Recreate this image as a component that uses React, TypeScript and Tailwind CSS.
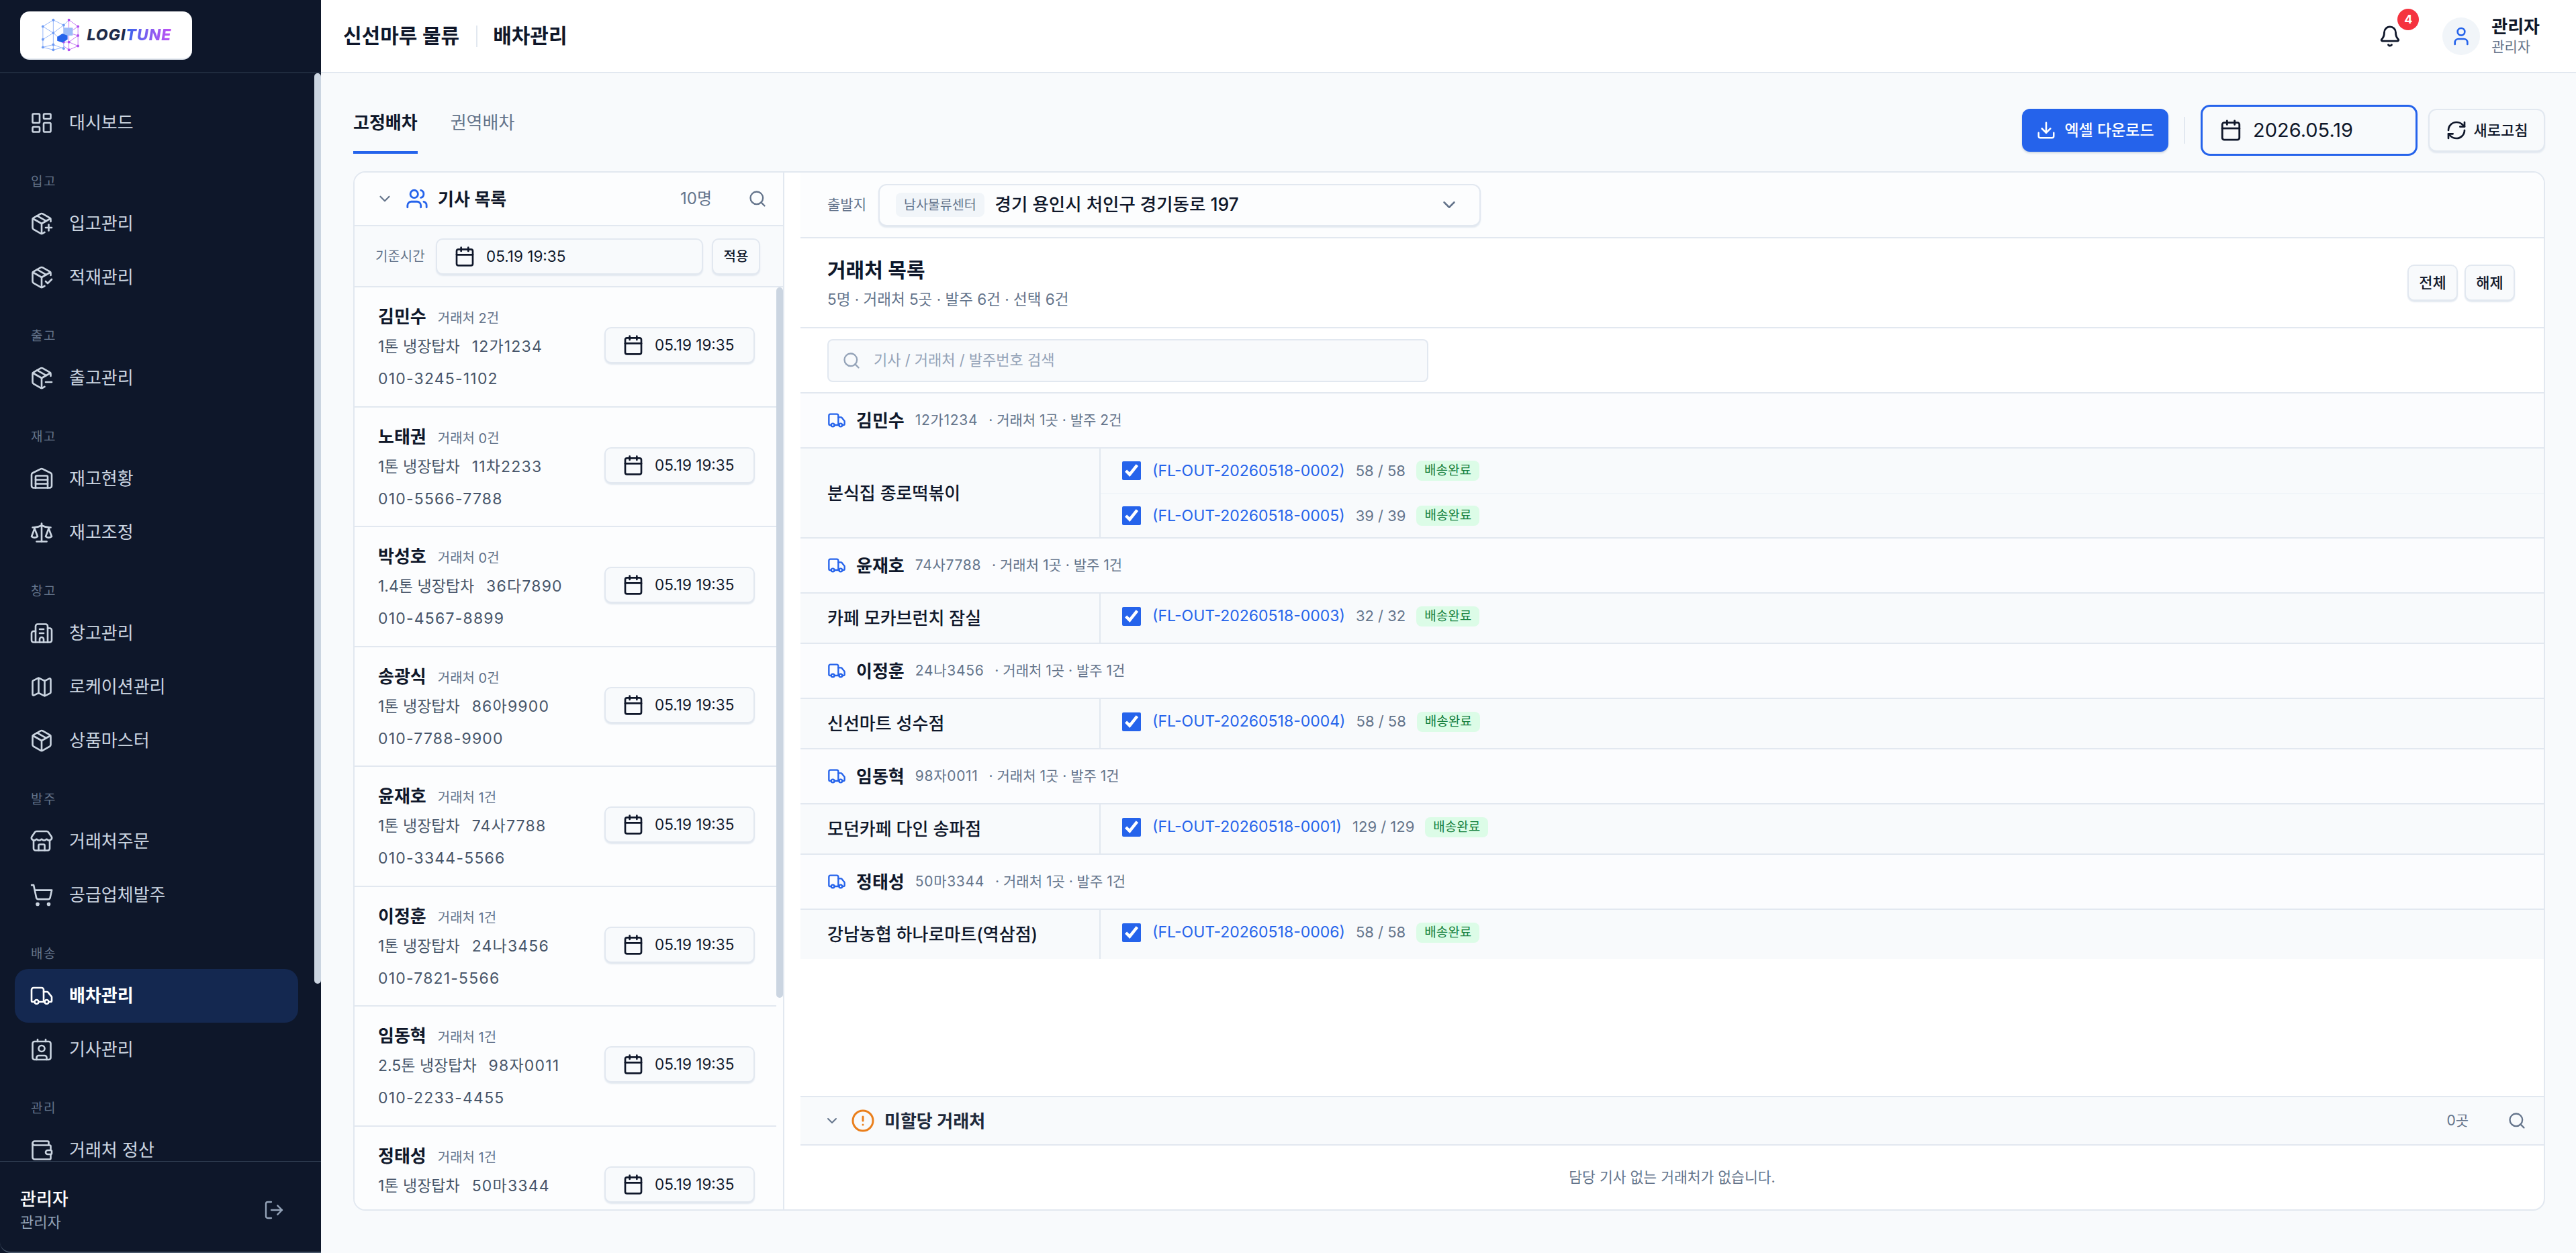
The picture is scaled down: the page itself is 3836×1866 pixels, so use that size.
import {
  Bell,
  Building2,
  Calendar,
  ChevronDown,
  CircleAlert,
  Contact,
  Download,
  LayoutDashboard,
  LogOut,
  Map as MapIcon,
  Package,
  PackageCheck,
  PackageMinus,
  PackagePlus,
  RefreshCw,
  Scale,
  Search,
  ShoppingCart,
  Store,
  Truck,
  User,
  Users,
  Wallet,
  Warehouse,
} from "lucide-react";

const navSections = [
  { items: [{ label: "대시보드", icon: LayoutDashboard }] },
  {
    title: "입고",
    items: [
      { label: "입고관리", icon: PackagePlus },
      { label: "적재관리", icon: PackageCheck },
    ],
  },
  { title: "출고", items: [{ label: "출고관리", icon: PackageMinus }] },
  {
    title: "재고",
    items: [
      { label: "재고현황", icon: Warehouse },
      { label: "재고조정", icon: Scale },
    ],
  },
  {
    title: "창고",
    items: [
      { label: "창고관리", icon: Building2 },
      { label: "로케이션관리", icon: MapIcon },
      { label: "상품마스터", icon: Package },
    ],
  },
  {
    title: "발주",
    items: [
      { label: "거래처주문", icon: Store },
      { label: "공급업체발주", icon: ShoppingCart },
    ],
  },
  {
    title: "배송",
    items: [
      { label: "배차관리", icon: Truck, active: true },
      { label: "기사관리", icon: Contact },
    ],
  },
  { title: "관리", items: [{ label: "거래처 정산", icon: Wallet }] },
];

const drivers = [
  { name: "김민수", count: 2, car: "1톤 냉장탑차", plate: "12가1234", phone: "010-3245-1102" },
  { name: "노태권", count: 0, car: "1톤 냉장탑차", plate: "11차2233", phone: "010-5566-7788" },
  { name: "박성호", count: 0, car: "1.4톤 냉장탑차", plate: "36다7890", phone: "010-4567-8899" },
  { name: "송광식", count: 0, car: "1톤 냉장탑차", plate: "86아9900", phone: "010-7788-9900" },
  { name: "윤재호", count: 1, car: "1톤 냉장탑차", plate: "74사7788", phone: "010-3344-5566" },
  { name: "이정훈", count: 1, car: "1톤 냉장탑차", plate: "24나3456", phone: "010-7821-5566" },
  { name: "임동혁", count: 1, car: "2.5톤 냉장탑차", plate: "98자0011", phone: "010-2233-4455" },
  { name: "정태성", count: 1, car: "1톤 냉장탑차", plate: "50마3344", phone: "010-9988-7766" },
];

const groups = [
  {
    driver: "김민수",
    plate: "12가1234",
    orderCount: 2,
    client: "분식집 종로떡볶이",
    orders: [
      { code: "(FL-OUT-20260518-0002)", qty: "58 / 58" },
      { code: "(FL-OUT-20260518-0005)", qty: "39 / 39" },
    ],
  },
  {
    driver: "윤재호",
    plate: "74사7788",
    orderCount: 1,
    client: "카페 모카브런치 잠실",
    orders: [{ code: "(FL-OUT-20260518-0003)", qty: "32 / 32" }],
  },
  {
    driver: "이정훈",
    plate: "24나3456",
    orderCount: 1,
    client: "신선마트 성수점",
    orders: [{ code: "(FL-OUT-20260518-0004)", qty: "58 / 58" }],
  },
  {
    driver: "임동혁",
    plate: "98자0011",
    orderCount: 1,
    client: "모던카페 다인 송파점",
    orders: [{ code: "(FL-OUT-20260518-0001)", qty: "129 / 129" }],
  },
  {
    driver: "정태성",
    plate: "50마3344",
    orderCount: 1,
    client: "강남농협 하나로마트(역삼점)",
    orders: [{ code: "(FL-OUT-20260518-0006)", qty: "58 / 58" }],
  },
];

function LogoMark() {
  const blue = [
    [4, 12], [4, 32], [4, 44], [20, 2], [20, 22], [20, 40], [20, 48], [36, 10], [36, 46],
  ];
  const purple = [
    [44, 2], [44, 22], [44, 36], [44, 48], [58, 12], [58, 26], [58, 42], [36, 36],
  ];
  return (
    <svg width="60" height="50" viewBox="0 0 62 50" fill="none">
      <g stroke="#7aa2f7" strokeWidth="0.8">
        <path d="M4 12 20 2 36 10 44 2M4 12v32l16 4 16-4M20 2v46M4 12l16 10 16-12M4 32l16-10 16 14M4 44l16-4 16 6M36 10v36" />
      </g>
      <g stroke="#b456f0" strokeWidth="0.8">
        <path d="M44 2 58 12v30L44 48 36 42M44 2v46M58 12 44 22 36 14M58 26 44 22M58 26 44 36M58 42 44 36 36 36" />
      </g>
      {blue.map(([x, y]) => (
        <circle key={`${x}-${y}`} cx={x} cy={y} r="2" fill="#6d9bf5" />
      ))}
      {purple.map(([x, y]) => (
        <circle key={`${x}-${y}`} cx={x} cy={y} r="2" fill="#b04df0" />
      ))}
      <rect x="36" y="14" width="14" height="12" rx="1" fill="#9dbcf8" />
      <path d="M26 28 34 23 42 26 42 32 34 37 26 34Z" fill="#2563eb" />
    </svg>
  );
}

function Sidebar() {
  return (
    <aside className="flex h-full w-[478px] shrink-0 flex-col rounded-bl-[16px] border-b-2 border-[#475569] bg-[#0e172a] text-[#cbd5e1]">
      <div className="flex h-[109px] shrink-0 items-start border-b border-[#334155] pl-[30px] pt-[17px]">
        <div className="flex h-[72px] w-[256px] items-center justify-center gap-[9px] rounded-[14px] border-b-2 border-[#e2e8f0] bg-white">
          <LogoMark />
          <span className="text-[23px] font-extrabold italic leading-none tracking-[1px] text-[#1e2b4a]">
            LOGI
            <span className="bg-gradient-to-r from-[#2563eb] to-[#c04df5] bg-clip-text text-transparent">TUNE</span>
          </span>
        </div>
      </div>
      <div className="relative min-h-0 flex-1 overflow-hidden">
        <nav className="pl-[22px] pr-[34px] pt-[34px]">
          {navSections.map((section, i) => (
            <div key={i}>
              {section.title && (
                <div className="pl-[24px] pt-[32px] pb-[6px] text-[19px] leading-[32px] tracking-[1.5px] text-[#64748b]">
                  {section.title}
                </div>
              )}
              {section.items.map((item) => (
                <div
                  key={item.label}
                  className={`flex h-[80px] items-center gap-[23px] rounded-[20px] pl-[22px] text-[26px] leading-[30px] ${
                    item.active ? "bg-[#142850] font-semibold text-white" : ""
                  }`}
                >
                  <item.icon size={36} strokeWidth={1.75} />
                  <span>{item.label}</span>
                </div>
              ))}
            </div>
          ))}
        </nav>
        <div className="absolute right-0 top-0 h-[1356px] w-[10px] rounded-full bg-[#cbd5e1]" />
      </div>
      <div className="flex h-[135px] shrink-0 items-center justify-between border-t border-[#334155] pl-[30px] pr-[54px] pt-[9px]">
        <div>
          <div className="text-[26px] font-medium leading-[36px] text-white">관리자</div>
          <div className="text-[22px] leading-[32px] text-[#94a3b8]">관리자</div>
        </div>
        <LogOut size={32} strokeWidth={1.75} className="text-[#94a3b8]" />
      </div>
    </aside>
  );
}

function DateButton({ className }: { className: string }) {
  return (
    <div
      className={`flex h-[54px] items-center gap-[16px] rounded-[10px] border-2 border-[#e2e8f0] bg-[#f8fafc] pl-[25px] text-[22.5px] text-[#0f172a] shadow-[0_2px_2px_#e2e8f0] ${className}`}
    >
      <Calendar size={32} strokeWidth={2} className="shrink-0" />
      <span>05.19 19:35</span>
    </div>
  );
}

function SmallButton({ children }: { children: string }) {
  return (
    <button className="flex h-[54px] w-[75px] items-center justify-center rounded-[10px] border-2 border-[#e2e8f0] bg-[#f8fafc] text-[22px] font-medium text-[#0f172a] shadow-[0_2px_2px_#e2e8f0]">
      {children}
    </button>
  );
}

function DriverPanel() {
  return (
    <section className="flex h-full w-[640px] shrink-0 flex-col border-r-2 border-[#e2e8f0] bg-[#fcfdfe]">
      <div className="flex h-[80px] shrink-0 items-center border-b-2 border-[#e2e8f0] pl-[32px] pr-[24px]">
        <ChevronDown size={26} className="text-[#64748b]" />
        <Users size={34} strokeWidth={2} className="ml-[18px] text-[#2563eb]" />
        <span className="ml-[14px] text-[26px] font-semibold text-[#0f172a]">기사 목록</span>
        <span className="ml-auto text-[24px] text-[#64748b]">10명</span>
        <Search size={28} strokeWidth={2} className="ml-[54px] text-[#64748b]" />
      </div>
      <div className="flex h-[91px] shrink-0 items-center border-b-2 border-[#e2e8f0] bg-[#f8fafc] pl-[31px]">
        <span className="w-[90px] text-[20px] text-[#64748b]">기준시간</span>
        <DateButton className="w-[398px]" />
        <button className="ml-[13px] flex h-[54px] w-[72px] items-center justify-center rounded-[10px] border-2 border-[#e2e8f0] bg-[#f8fafc] text-[20px] font-medium text-[#0f172a] shadow-[0_2px_2px_#e2e8f0]">
          적용
        </button>
      </div>
      <div className="relative min-h-0 flex-1 overflow-hidden">
        <div className="w-[628px]">
          {drivers.map((d) => (
            <div
              key={d.name}
              className="flex h-[178.5px] items-center justify-between border-b-2 border-[#e2e8f0] pl-[35px] pr-[32px]"
            >
              <div className="mt-[8px] flex flex-col">
                <div className="flex items-baseline gap-[17px]">
                  <span className="text-[26px] font-semibold leading-[44px] text-[#0f172a]">{d.name}</span>
                  <span className="text-[20px] text-[#64748b]">거래처 {d.count}건</span>
                </div>
                <div className="flex gap-[18px] text-[23px] leading-[44px] text-[#475569]">
                  <span>{d.car}</span>
                  <span className="tracking-[1.2px]">{d.plate}</span>
                </div>
                <div className="text-[23px] leading-[52px] tracking-[1.2px] text-[#475569]">{d.phone}</div>
              </div>
              <DateButton className="mb-[4px] w-[224px]" />
            </div>
          ))}
        </div>
        <div className="absolute right-0 top-0 h-[1058px] w-[10px] rounded-full bg-[#cbd5e1]" />
      </div>
    </section>
  );
}

function ClientGroup({ group, isLast }: { group: (typeof groups)[number]; isLast: boolean }) {
  const single = group.orders.length === 1;
  return (
    <div>
      <div className="flex h-[82px] items-center border-b-2 border-[#e2e8f0] bg-[#fbfcfe] pl-[40px]">
        <Truck size={28} strokeWidth={2} className="text-[#2563eb]" />
        <span className="ml-[15px] text-[26px] font-semibold text-[#0f172a]">{group.driver}</span>
        <span className="ml-[16px] text-[21px] tracking-[0.7px] text-[#64748b]">{group.plate}</span>
        <span className="ml-[16px] text-[21px] text-[#64748b]">· 거래처 1곳 · 발주 {group.orderCount}건</span>
      </div>
      <div className={`flex bg-[#f8fafc] ${isLast ? "" : "border-b-2 border-[#e2e8f0]"}`}>
        <div className="flex w-[447px] shrink-0 items-center border-r-2 border-[#e2e8f0] pl-[40px] text-[26px] font-medium text-[#0f172a]">
          {group.client}
        </div>
        <div className="flex-1">
          {group.orders.map((o, i) => (
            <div
              key={o.code}
              className={`flex items-center pl-[32px] ${single ? "h-[73px] pb-[6px]" : "h-[66px]"} ${
                i > 0 ? "border-t-2 border-[#f1f5f9]" : ""
              }`}
            >
              <input type="checkbox" readOnly checked className="h-[28px] w-[28px] accent-[#2563eb]" />
              <span className="ml-[17px] text-[23px] text-[#2563eb]">{o.code}</span>
              <span className="ml-[16px] text-[22px] text-[#64748b]">{o.qty}</span>
              <span className="ml-[16px] rounded-[8px] bg-[#dcfce7] px-[12px] text-[19px] leading-[30px] text-[#15803d]">
                배송완료
              </span>
            </div>
          ))}
        </div>
      </div>
    </div>
  );
}

function ClientPanel() {
  return (
    <section className="flex h-full min-w-0 flex-1 flex-col pl-[24px]">
      <div className="flex h-[98px] shrink-0 items-center border-b-2 border-[#e2e8f0] bg-[#fcfdfe] pl-[40px]">
        <span className="text-[21px] text-[#64748b]">출발지</span>
        <div className="ml-[18px] flex h-[63px] w-[897px] items-center rounded-[12px] border-2 border-[#e2e8f0] bg-[#fcfdfe] pl-[24px] pr-[30px] shadow-[0_2px_2px_#e2e8f0]">
          <span className="rounded-[8px] bg-[#f1f5f9] px-[12px] text-[19.5px] leading-[36px] text-[#64748b]">남사물류센터</span>
          <span className="ml-[16px] text-[26.5px] font-medium text-[#0f172a]">경기 용인시 처인구 경기동로 197</span>
          <ChevronDown size={30} strokeWidth={2} className="ml-auto text-[#64748b]" />
        </div>
      </div>
      <div className="flex h-[134px] shrink-0 items-center justify-between border-b-2 border-[#e2e8f0] pl-[40px] pr-[43px] pt-[6px]">
        <div>
          <div className="text-[30px] font-semibold leading-[44px] text-[#0f172a]">거래처 목록</div>
          <div className="text-[22.5px] leading-[44px] text-[#64748b]">5명 · 거래처 5곳 · 발주 6건 · 선택 6건</div>
        </div>
        <div className="-mt-[6px] flex gap-[10px]">
          <SmallButton>전체</SmallButton>
          <SmallButton>해제</SmallButton>
        </div>
      </div>
      <div className="flex h-[97px] shrink-0 items-center border-b-2 border-[#e2e8f0] pl-[40px]">
        <div className="flex h-[64px] w-[895px] items-center gap-[19px] rounded-[8px] border-2 border-[#e2e8f0] bg-[#f8fafc] pl-[20px] text-[22px] text-[#94a3b8]">
          <Search size={28} strokeWidth={2} />
          <span>기사 / 거래처 / 발주번호 검색</span>
        </div>
      </div>
      <div className="min-h-0 flex-1">
        {groups.map((g, i) => (
          <ClientGroup key={g.driver} group={g} isLast={i === groups.length - 1} />
        ))}
      </div>
      <div className="flex h-[74px] shrink-0 items-center border-y-2 border-[#e2e8f0] bg-[#f8fafc] pl-[35px] pr-[26px]">
        <ChevronDown size={24} className="text-[#64748b]" />
        <CircleAlert size={36} strokeWidth={2} className="ml-[16px] text-[#ea7f1c]" />
        <span className="ml-[14px] text-[26px] font-semibold text-[#1e293b]">미할당 거래처</span>
        <span className="ml-auto text-[21px] text-[#64748b]">0곳</span>
        <Search size={28} strokeWidth={2} className="ml-[58px] text-[#64748b]" />
      </div>
      <div className="flex h-[95px] shrink-0 items-center justify-center text-[21.5px] text-[#64748b]">
        담당 기사 없는 거래처가 없습니다.
      </div>
    </section>
  );
}

export default function App() {
  return (
    <div className="flex h-screen w-screen overflow-hidden bg-[#0e172a] text-[#0f172a] [font-family:Inter,'Noto_Sans_CJK_KR',sans-serif]">
      <Sidebar />
      <div className="flex min-w-0 flex-1 flex-col bg-[#f8fafc]">
        <header className="flex h-[109px] shrink-0 items-center border-b-2 border-[#e2e8f0] bg-white pl-[33px] pr-[54px]">
          <span className="text-[30px] font-semibold">신선마루 물류</span>
          <span className="ml-[25px] mr-[23px] h-[32px] w-[2px] bg-[#e2e8f0]" />
          <span className="text-[30px] font-semibold">배차관리</span>
          <div className="relative ml-auto mr-[61px]">
            <Bell size={34} strokeWidth={2} />
            <span className="absolute -right-[26px] -top-[24px] flex h-[32px] w-[32px] items-center justify-center rounded-full bg-[#f5333f] text-[18px] font-bold text-white">
              4
            </span>
          </div>
          <div className="flex h-[56px] w-[56px] items-center justify-center rounded-full bg-[#f1f5f9]">
            <User size={32} strokeWidth={2} className="text-[#2563eb]" />
          </div>
          <div className="ml-[17px]">
            <div className="text-[26px] font-semibold leading-[32px]">관리자</div>
            <div className="text-[21px] leading-[28px] text-[#64748b]">관리자</div>
          </div>
        </header>
        <main className="flex min-h-0 flex-1 flex-col pl-[48px] pr-[46px] pb-[63px]">
          <div className="flex h-[146px] shrink-0 items-start justify-between">
            <div className="flex gap-[49px] pt-[55px] text-[26px]">
              <div className="border-b-4 border-[#2563eb] pb-[23px] font-semibold leading-[38px] text-[#0f172a]">고정배차</div>
              <div className="leading-[38px] text-[#64748b]">권역배차</div>
            </div>
            <div className="flex items-center pt-[47px]">
              <button className="flex h-[64px] w-[218px] items-center justify-center gap-[12px] rounded-[12px] bg-[#2563eb] text-[23px] font-medium text-white shadow-[0_2px_3px_#cbd5e1]">
                <Download size={30} strokeWidth={2} />
                엑셀 다운로드
              </button>
              <span className="mx-[23px] h-[40px] w-[2px] bg-[#e2e8f0]" />
              <div className="flex h-[76px] w-[323px] items-center gap-[16px] rounded-[14px] border-[3px] border-[#2563eb] bg-[#f8fafc] pl-[25px] text-[29px] text-[#0f172a]">
                <Calendar size={34} strokeWidth={2} />
                2026.05.19
              </div>
              <button className="ml-[16px] flex h-[64px] w-[174px] items-center justify-center gap-[10px] rounded-[12px] border-2 border-[#e2e8f0] bg-[#f8fafc] text-[22px] font-medium shadow-[0_2px_2px_#e2e8f0]">
                <RefreshCw size={32} strokeWidth={2} />
                새로고침
              </button>
            </div>
          </div>
          <div className="flex min-h-0 flex-1 overflow-hidden rounded-[18px] border-2 border-[#e2e8f0] bg-white">
            <DriverPanel />
            <ClientPanel />
          </div>
        </main>
      </div>
    </div>
  );
}
